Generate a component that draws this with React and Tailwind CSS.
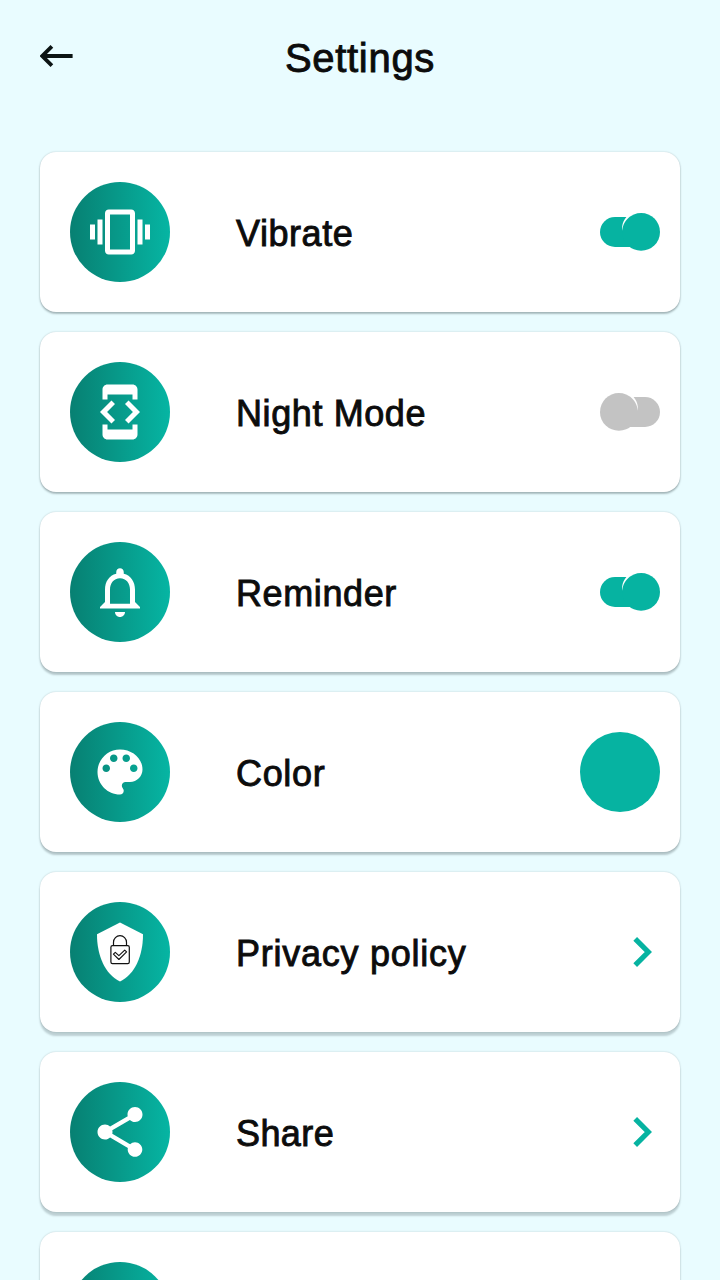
import React from "react";

const VibrateIcon = () => (
  <path d="M0 15h2V9H0v6zm3 2h2V7H3v10zm19-8v6h2V9h-2zm-3 8h2V7h-2v10zM16.5 3h-9C6.67 3 6 3.67 6 4.5v15c0 .83.67 1.5 1.5 1.5h9c.83 0 1.5-.67 1.5-1.5v-15c0-.83-.67-1.5-1.5-1.5zM16 19H8V5h8v14z" />
);

const NightIcon = () => (
  <path d="M7 5h10v2h2V3c0-1.1-.9-1.99-2-1.99L7 1c-1.1 0-2 .9-2 2v4h2V5zm8.41 11.59L20 12l-4.59-4.59L14 8.83 17.17 12 14 15.17l1.41 1.42zM10 15.17L6.83 12 10 8.83 8.59 7.41 4 12l4.59 4.59L10 15.17zM17 19H7v-2H5v4c0 1.1.9 2 2 2h10c1.1 0 2-.9 2-2v-4h-2v2z" />
);

const BellIcon = () => (
  <path d="M12 22c1.1 0 2-.9 2-2h-4c0 1.1.9 2 2 2zm6-6v-5c0-3.07-1.63-5.64-4.5-6.32V4c0-.83-.67-1.5-1.5-1.5s-1.5.67-1.5 1.5v.68C7.64 5.36 6 7.92 6 11v5l-2 2v.6h16V18l-2-2zm-2 .7H8V11c0-2.48 1.51-4.5 4-4.5s4 2.02 4 4.5v5.7z" />
);

const PaletteIcon = () => (
  <path d="M12 3c-4.97 0-9 4.03-9 9s4.03 9 9 9c.83 0 1.5-.67 1.5-1.5 0-.39-.15-.74-.39-1.01-.23-.26-.38-.61-.38-.99 0-.83.67-1.5 1.5-1.5H16c2.76 0 5-2.24 5-5 0-4.42-4.03-8-9-8zm-5.5 9c-.83 0-1.5-.67-1.5-1.5S5.67 9 6.5 9 8 9.67 8 10.5 7.33 12 6.5 12zm3-4C8.67 8 8 7.33 8 6.5S8.67 5 9.5 5s1.5.67 1.5 1.5S10.33 8 9.5 8zm5 0c-.83 0-1.5-.67-1.5-1.5S13.67 5 14.5 5s1.5.67 1.5 1.5S15.33 8 14.5 8zm3 4c-.83 0-1.5-.67-1.5-1.5S16.67 9 17.5 9s1.5.67 1.5 1.5-.67 1.5-1.5 1.5z" />
);

const PrivacyIcon = () => (
  <g transform="scale(0.4) translate(-20 -20)">
    <path d="M50 20.5L73 32.2C73 54 65 72 50 79.5C35 72 27 54 27 32.2Z" />
    <g fill="none" stroke="#111" strokeWidth="1.2">
      <rect x="40.9" y="43.6" width="18.4" height="18" rx="1.6" />
      <path d="M43.5 43.6V40.2a6.5 6.5 0 0 1 13 0v3.4" />
      <path
        d="M43.4 52.2l1.9-1.9 3.6 3.4 5.8-5.6 1.9 1.8-7.7 7.6z"
        strokeWidth="1.1"
        strokeLinejoin="round"
      />
    </g>
  </g>
);

const ShareIcon = () => (
  <path d="M18 16.08c-.76 0-1.44.3-1.96.77L8.91 12.7c.05-.23.09-.46.09-.7s-.04-.47-.09-.7l7.05-4.11c.54.5 1.25.81 2.04.81 1.66 0 3-1.34 3-3s-1.34-3-3-3-3 1.34-3 3c0 .24.04.47.09.7L8.04 9.81C7.5 9.31 6.79 9 6 9c-1.66 0-3 1.34-3 3s1.34 3 3 3c.79 0 1.5-.31 2.04-.81l7.12 4.16c-.05.21-.08.43-.08.65 0 1.61 1.31 2.92 2.92 2.92s2.92-1.31 2.92-2.92-1.31-2.92-2.92-2.92z" />
);

const Toggle = ({ on }) => (
  <svg
    width="60"
    height="40"
    viewBox="0 0 60 40"
    className={on ? "text-[#06b3a1]" : "-scale-x-100 text-[#c3c3c3]"}
  >
    <rect y="5" width="58" height="30" rx="15" fill="currentColor" />
    <circle cx="41.1" cy="19.9" r="18.9" fill="currentColor" />
    {/* highlight between track and knob */}
    <path d="M26.6 4.8L30 4.4C25.4 8.2 22.8 12.6 22.2 18.8C21.6 13.2 23.4 8.4 26.6 4.8Z" fill="#fff" />
  </svg>
);

const Swatch = () => <div className="size-20 rounded-full bg-[#06b3a1]" />;

const Chevron = () => (
  <svg width="20" height="30" viewBox="0 0 20 30" className="mr-2">
    <path
      d="M3.2 1.9L16.3 15L3.2 28.1"
      fill="none"
      stroke="#06b3a1"
      strokeWidth="5.2"
    />
  </svg>
);

const rows = [
  { label: "Vibrate", icon: <VibrateIcon />, action: <Toggle on />, style: "tracking-[0.55px]", shadow: "shadow-[0_2px_2px_rgba(0,20,25,0.26),0_0_2px_rgba(0,20,25,0.22)]" },
  { label: "Night Mode", icon: <NightIcon />, action: <Toggle />, style: "tracking-[0.6px]", shadow: "shadow-[0_2px_2px_rgba(0,20,25,0.26),0_0_2px_rgba(0,20,25,0.22)]" },
  { label: "Reminder", icon: <BellIcon />, action: <Toggle on />, style: "tracking-[0.6px]", shadow: "shadow-[0_3px_2px_rgba(0,20,25,0.22),0_0_2px_rgba(0,20,25,0.22)]" },
  { label: "Color", icon: <PaletteIcon />, action: <Swatch />, style: "tracking-[0.65px]", shadow: "shadow-[0_3px_2px_rgba(0,20,25,0.22),0_0_2px_rgba(0,20,25,0.22)]" },
  { label: "Privacy policy", icon: <PrivacyIcon />, action: <Chevron />, style: "tracking-[0.75px]", shadow: "shadow-[0_4px_2px_rgba(0,20,25,0.19),0_0_2px_rgba(0,20,25,0.22)]" },
  { label: "Share", icon: <ShareIcon />, action: <Chevron />, style: "tracking-[0.4px]", shadow: "shadow-[0_4px_2px_rgba(0,20,25,0.19),0_0_2px_rgba(0,20,25,0.22)]" },
  { label: "", icon: null, action: null, style: "", shadow: "shadow-[0_4px_2px_rgba(0,20,25,0.19),0_0_2px_rgba(0,20,25,0.22)]" },
];

const App = () => {
  return (
    <div className="h-[1280px] w-[720px] overflow-hidden bg-[#e9fcff] px-10 font-['Liberation_Sans',sans-serif] text-[#0c0c0c]">
      <div className="grid h-[152px] grid-cols-[100px_1fr_100px] items-start">
        <svg width="34" height="24" viewBox="0 0 34 24" className="mt-11">
          <path
            d="M11.9 2.3L2.3 12L11.9 21.7M2.3 12H32.6"
            fill="none"
            stroke="#0c1414"
            strokeWidth="3.8"
          />
        </svg>
        <h1 className="mt-[35px] text-center text-[40px] leading-[46px] tracking-[0.7px] [-webkit-text-stroke:0.9px_#0c0c0c]">
          Settings
        </h1>
      </div>

      <div className="flex flex-col gap-5">
        {rows.map((row, index) => (
          <div
            key={index}
            className={`flex h-40 shrink-0 items-center rounded-2xl bg-white pr-5 pl-[30px] ${row.shadow}`}
          >
            <div className="flex size-[100px] items-center justify-center rounded-full bg-linear-to-r from-[#078072] to-[#06b5a3]">
              <svg width="60" height="60" viewBox="0 0 24 24" fill="#fff">
                {row.icon}
              </svg>
            </div>
            <span
              className={`ml-[66px] flex-1 pt-1 text-[36px] leading-10 [-webkit-text-stroke:0.9px_#0c0c0c] ${row.style}`}
            >
              {row.label}
            </span>
            {row.action}
          </div>
        ))}
      </div>
    </div>
  );
};

export default App;
